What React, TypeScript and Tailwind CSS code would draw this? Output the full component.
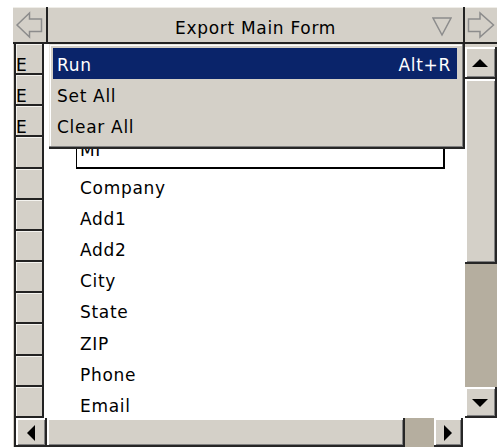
import React from "react";

// Classic raised 3D edge used by buttons, thumbs and header cells
const raised =
  "bg-[#d4d0c8] shadow-[inset_-2px_-2px_0_#262626,inset_2px_2px_0_#ffffff,inset_-3px_-3px_0_#808080]";

const rowsBelow = ["", "Company", "Add1", "Add2", "City", "State", "ZIP", "Phone", "Email"];

function LeftArrow() {
  return (
    <svg width="33" height="35" viewBox="0 0 33 35" className="block">
      <polygon
        points="4,18 16.5,6 16.5,12 28.5,12 28.5,24.5 16.5,24.5 16.5,30"
        fill="none"
        stroke="#8c8c8c"
        strokeWidth="1.5"
        strokeLinejoin="miter"
      />
    </svg>
  );
}

function RightArrow() {
  return (
    <svg width="32" height="35" viewBox="0 0 32 35" className="block">
      <polygon
        points="3.5,12 15,12 15,6 28.5,18 15,30 15,24.5 3.5,24.5"
        fill="none"
        stroke="#8c8c8c"
        strokeWidth="1.5"
      />
    </svg>
  );
}

function DropTriangle() {
  return (
    <svg width="20" height="35" viewBox="0 0 20 35" className="block">
      <polygon points="1,11 19,11 10,28" fill="none" stroke="#8c8c8c" strokeWidth="1.5" />
    </svg>
  );
}

function Tri({ dir }: { dir: "up" | "down" | "left" | "right" }) {
  if (dir === "up")
    return (
      <svg width="16" height="8" viewBox="0 0 16 8">
        <polygon points="0,8 16,8 8,0" fill="#000" />
      </svg>
    );
  if (dir === "down")
    return (
      <svg width="16" height="8" viewBox="0 0 16 8">
        <polygon points="0,0 16,0 8,8" fill="#000" />
      </svg>
    );
  if (dir === "left")
    return (
      <svg width="8" height="16" viewBox="0 0 8 16">
        <polygon points="8,0 8,16 0,8" fill="#000" />
      </svg>
    );
  return (
    <svg width="8" height="16" viewBox="0 0 8 16">
      <polygon points="0,0 0,16 8,8" fill="#000" />
    </svg>
  );
}

export default function App() {
  return (
    <div className="relative w-[497px] h-[447px] bg-white pt-[7px] pl-[13px] font-['DejaVu_Sans',sans-serif] text-[17px] tracking-[0.7px] leading-[20px] text-black overflow-hidden">
      {/* Form header bar */}
      <div className="flex h-[37px] bg-[#d4d0c8] border-b-2 border-[#222] shadow-[inset_0_1px_0_#efede8]">
        <div className="w-[35px] border-r-2 border-[#222]">
          <LeftArrow />
        </div>
        <div className="flex-1 grid grid-cols-[1fr_auto_1fr]">
          <span />
          <span className="self-end pb-[4px]">Export Main Form</span>
          <div className="justify-self-end mr-[11px]">
            <DropTriangle />
          </div>
        </div>
        <div className="w-[34px] border-l-2 border-[#222]">
          <RightArrow />
        </div>
      </div>

      {/* Body: record selectors, field list, vertical scroll bar */}
      <div className="flex h-[374px]">
        <div className="w-[31px] border-l border-[#d4d0c8]">
          <div className="h-full border-l-2 border-[#222] grid grid-rows-12">
            {Array.from({ length: 12 }).map((_, i) => (
              <div
                key={i}
                className="bg-[#d4d0c8] border-r-2 border-b-2 border-[#222] shadow-[inset_1px_1px_0_#f4f3ef] pt-[11px]"
              >
                {i < 3 ? "E" : ""}
              </div>
            ))}
          </div>
        </div>

        <div className="flex-1 grid grid-rows-12">
          <div />
          <div />
          <div />
          <div className="pl-[32px] pr-[20px]">
            <div className="h-full border border-black border-r-2 border-b-2 pl-[3px] pt-[2px]">MI</div>
          </div>
          {rowsBelow.slice(1).map((t) => (
            <div key={t} className="flex items-end pl-[36px] pb-[2px]">
              {t}
            </div>
          ))}
        </div>

        <div className="w-[32px] flex flex-col bg-[#d4d0c8] pt-[3px]">
          <div className={`h-[32px] flex items-center justify-center pr-[2px] ${raised}`}>
            <Tri dir="up" />
          </div>
          <div className={`h-[185px] ${raised}`} />
          <div className="h-[123px] bg-[#b5ae9f]" />
          <div className={`h-[31px] flex items-center justify-center pr-[2px] ${raised}`}>
            <Tri dir="down" />
          </div>
        </div>
      </div>

      {/* Horizontal scroll bar and corner */}
      <div className="flex h-[29px]">
        <div className="flex w-[452px] border-l border-[#d4d0c8]">
          <div className="flex border-l-2 border-[#222]">
            <div className={`w-[31px] flex items-center justify-center pr-[2px] ${raised}`}>
              <Tri dir="left" />
            </div>
          </div>
          <div className={`w-[358px] ${raised}`} />
          <div className="w-[29px] bg-[#b5ae9f]" />
          <div className={`w-[29px] flex items-center justify-center pr-[2px] ${raised}`}>
            <Tri dir="right" />
          </div>
        </div>
        <div className="flex-1 bg-white" />
      </div>

      {/* Shortcut menu */}
      <div className="absolute left-[49px] top-[44px] w-[416px] h-[105px] bg-[#d4d0c8] pt-[4px] pl-[4px] pr-[8px] shadow-[inset_-2px_-2px_0_#262626,inset_-3px_-3px_0_#808080,inset_1px_1px_0_#e8e6e0,inset_2px_2px_0_#ffffff]">
        <div className="h-[31px] flex items-center justify-between pt-[3px] pl-[4px] pr-[6px] bg-[#0a246a] text-white">
          <span>Run</span>
          <span>Alt+R</span>
        </div>
        <div className="h-[31px] flex items-center pt-[3px] pl-[4px]">Set All</div>
        <div className="h-[31px] flex items-center pt-[3px] pl-[4px]">Clear All</div>
      </div>
    </div>
  );
}
